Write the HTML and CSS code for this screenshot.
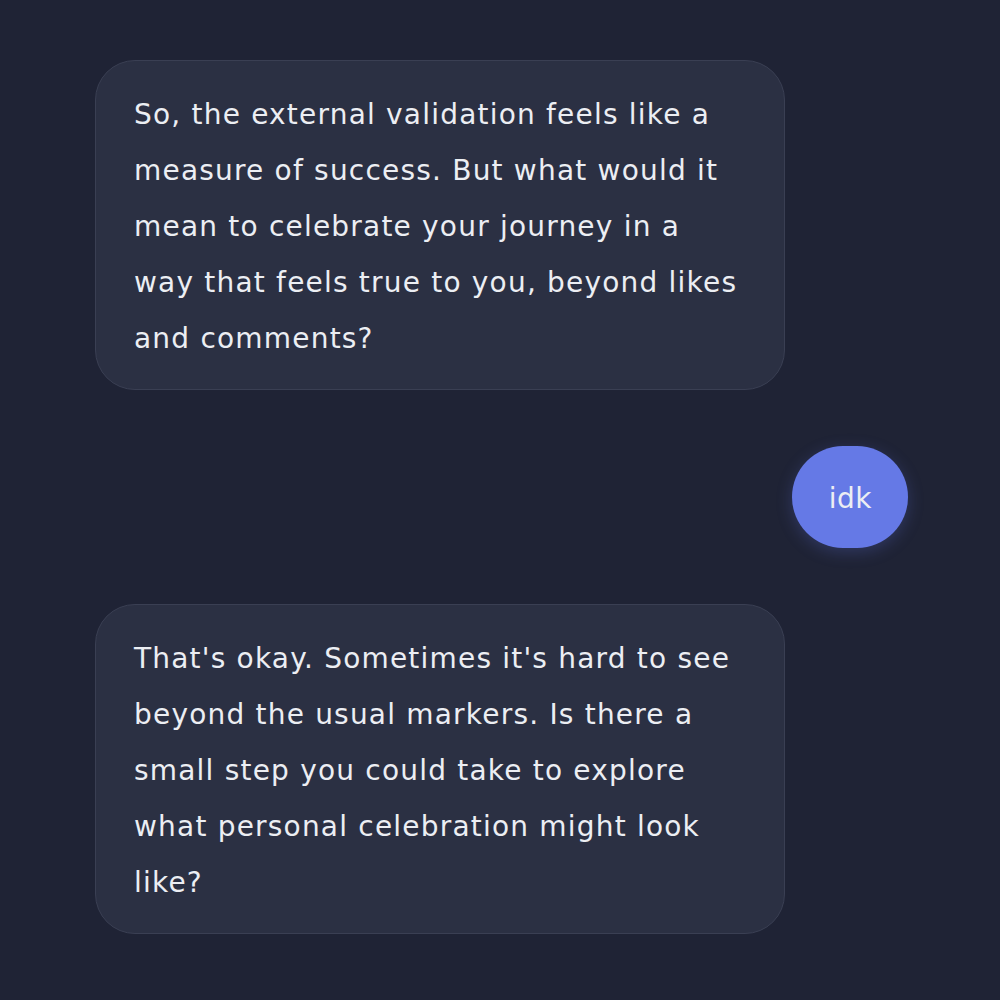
FILE: index.html
```html
<!DOCTYPE html>
<html>
<head>
<meta charset="utf-8">
<link rel="stylesheet" href="styles.css">
</head>
<body>
<div class="chat">
  <div class="msg bot">So, the external validation feels like a<br>measure of success. But what would it<br>mean to celebrate your journey in a<br>way that feels true to you, beyond likes<br>and comments?</div>
  <div class="msg user">idk</div>
  <div class="msg bot">That's okay. Sometimes it's hard to see<br>beyond the usual markers. Is there a<br>small step you could take to explore<br>what personal celebration might look<br>like?</div>
</div>
</body>
</html>
```
FILE: styles.css
```css
html, body {
  margin: 0;
  padding: 0;
  background: #1f2335;
  height: 100%;
}
.chat {
  display: flex;
  flex-direction: column;
  gap: 56px;
  padding: 60px 92px 0 95px;
  font-family: "DejaVu Sans", sans-serif;
}
.msg {
  font-size: 28px;
  line-height: 56px;
  color: #eceef3;
  box-sizing: border-box;
  white-space: nowrap;
  letter-spacing: 1.2px;
}
.bot {
  align-self: flex-start;
  width: 690px;
  padding: 26px 38px 22px;
  background: #2b3043;
  border: 1px solid #3a3f53;
  border-radius: 40px;
}
.user {
  align-self: flex-end;
  padding: 25px 36px 21px 37px;
  letter-spacing: 0.5px;
  background: #6579e6;
  border-radius: 51px;
  box-shadow: 0 4px 16px rgba(101, 121, 230, 0.25);
}
```
